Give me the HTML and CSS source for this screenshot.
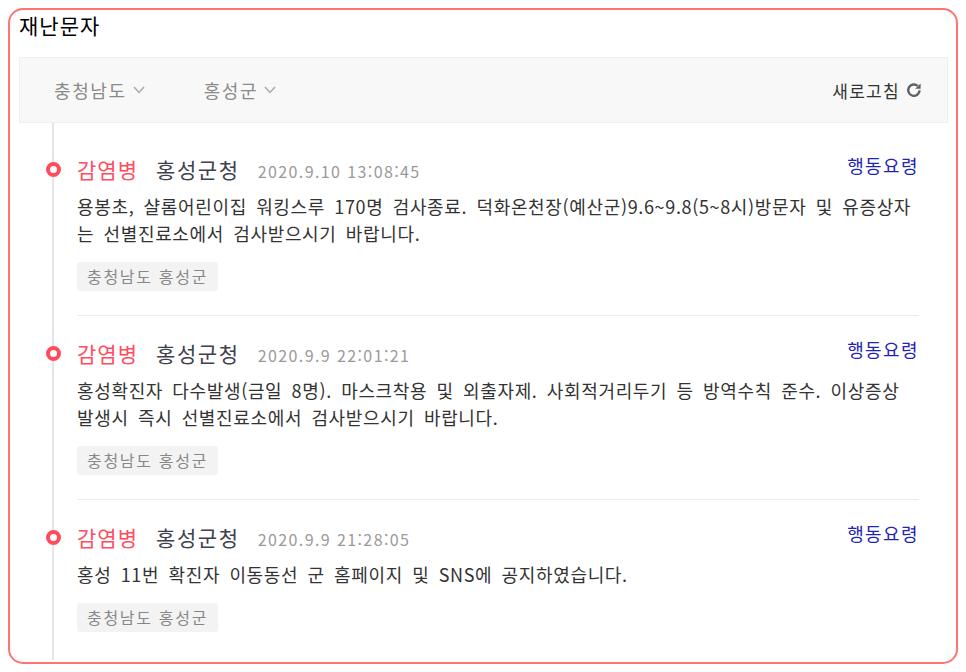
FILE: index.html
```html
<!DOCTYPE html>
<html lang="ko">
  <head>
    <meta charset="utf-8" />
    <meta name="viewport" content="width=device-width, initial-scale=1.0" />
    <link rel="stylesheet" href="styles.css">
    <title>재난문자</title>
  </head>

  <body>
    <div class="panel">
      <h2>재난문자</h2>

      <div class="filterbar">
        <span class="select">충청남도
          <svg class="chevron" viewBox="0 0 12 8" width="12" height="8"><path d="M1 1l5 5.5L11 1" /></svg>
        </span>
        <span class="select">홍성군
          <svg class="chevron" viewBox="0 0 12 8" width="12" height="8"><path d="M1 1l5 5.5L11 1" /></svg>
        </span>
        <span class="refresh">새로고침
          <svg class="refresh-icon" viewBox="0 0 16 16" width="16" height="16">
            <path d="M13.6 8.4a5.7 5.7 0 1 1-1.9-4.5" />
            <path class="arrowhead" d="M14.6 1.4v5.4H9.2z" />
          </svg>
        </span>
      </div>

      <ul class="timeline">
        <li class="item">
          <div class="head">
            <span class="kind">감염병</span>
            <span class="sender">홍성군청</span>
            <span class="date">2020.9.10 13:08:45</span>
            <a class="guide" href="#">행동요령</a>
          </div>
          <p class="msg">용봉초, 샬롬어린이집 워킹스루 170명 검사종료. 덕화온천장(예산군)9.6~9.8(5~8시)방문자 및 유증상자는 선별진료소에서 검사받으시기 바랍니다.</p>
          <span class="tag">충청남도 홍성군</span>
        </li>
        <li class="item">
          <div class="head">
            <span class="kind">감염병</span>
            <span class="sender">홍성군청</span>
            <span class="date">2020.9.9 22:01:21</span>
            <a class="guide" href="#">행동요령</a>
          </div>
          <p class="msg">홍성확진자 다수발생(금일 8명). 마스크착용 및 외출자제. 사회적거리두기 등 방역수칙 준수. 이상증상 발생시 즉시 선별진료소에서 검사받으시기 바랍니다.</p>
          <span class="tag">충청남도 홍성군</span>
        </li>
        <li class="item">
          <div class="head">
            <span class="kind">감염병</span>
            <span class="sender">홍성군청</span>
            <span class="date">2020.9.9 21:28:05</span>
            <a class="guide" href="#">행동요령</a>
          </div>
          <p class="msg">홍성 11번 확진자 이동동선 군 홈페이지 및 SNS에 공지하였습니다.</p>
          <span class="tag">충청남도 홍성군</span>
        </li>
      </ul>
    </div>
  </body>
</html>
```

FILE: styles.css
```css
body {
  margin: 8px;
  background: #fff;
  color: #333;
  font-family: "Noto Sans CJK KR", "Noto Sans", sans-serif;
}

.panel {
  display: flex;
  flex-direction: column;
  border: 2px solid #ff7373;
  border-radius: 15px;
  padding: 0 8px 2px 9px;
  height: 656px;
  box-sizing: border-box;
  overflow: hidden;
}

h2 {
  margin: 0;
  padding-top: 1px;
  height: 46px;
  font-size: 21px;
  font-weight: 400;
  letter-spacing: 1px;
  line-height: 28px;
  color: #000;
}

.filterbar {
  display: flex;
  align-items: center;
  flex-shrink: 0;
  height: 64px;
  padding: 0 25px 0 34px;
  background: #f8f8f8;
  border: 1px solid #efefef;
}

.select {
  display: flex;
  align-items: center;
  gap: 6px;
  margin-right: 59px;
  font-size: 18px;
  letter-spacing: 1.6px;
  color: #8a8a8a;
}

.chevron path {
  fill: none;
  stroke: #aaa;
  stroke-width: 1.5;
}

.refresh {
  display: flex;
  align-items: center;
  gap: 6px;
  margin-left: auto;
  font-size: 17px;
  letter-spacing: 1.3px;
  color: #333;
}

.refresh-icon path {
  fill: none;
  stroke: #606060;
  stroke-width: 2.4;
}

.refresh-icon .arrowhead {
  fill: #606060;
  stroke: none;
}

.timeline {
  flex: 1;
  list-style: none;
  margin: 0 29px 0 33px;
  padding: 9px 0 0 23px;
  border-left: 2px solid #e2e6ec;
}

.item {
  position: relative;
  padding: 23px 0 24px;
  border-bottom: 1px solid #ececec;
}

.item:last-child {
  border-bottom: none;
}

.item::before {
  content: "";
  position: absolute;
  left: -31px;
  top: 30px;
  width: 7px;
  height: 7px;
  border: 4px solid #ff4b5a;
  border-radius: 50%;
  background: #fff;
}

.head {
  display: flex;
  align-items: baseline;
  height: 28px;
  line-height: 28px;
}

.kind {
  font-size: 21px;
  letter-spacing: 1px;
  color: #ff4d5e;
  margin-right: 18px;
}

.sender {
  font-size: 21px;
  letter-spacing: 1.6px;
  color: #40404c;
  margin-right: 18px;
}

.date {
  font-size: 16px;
  letter-spacing: 1.4px;
  color: #9a9a9a;
}

.guide {
  margin-left: auto;
  align-self: flex-start;
  line-height: 20px;
  font-size: 18px;
  letter-spacing: 1.4px;
  color: #2424b4;
  text-decoration: none;
}

.msg {
  margin: 10px 0 15px;
  font-size: 18px;
  line-height: 27px;
  letter-spacing: 0.65px;
  word-spacing: 3.6px;
  color: #333;
}

.tag {
  display: inline-block;
  padding: 0 10px;
  height: 29px;
  line-height: 29px;
  font-size: 16px;
  letter-spacing: 1.7px;
  color: #888;
  background: #f3f3f3;
  border-radius: 3px;
}
```
